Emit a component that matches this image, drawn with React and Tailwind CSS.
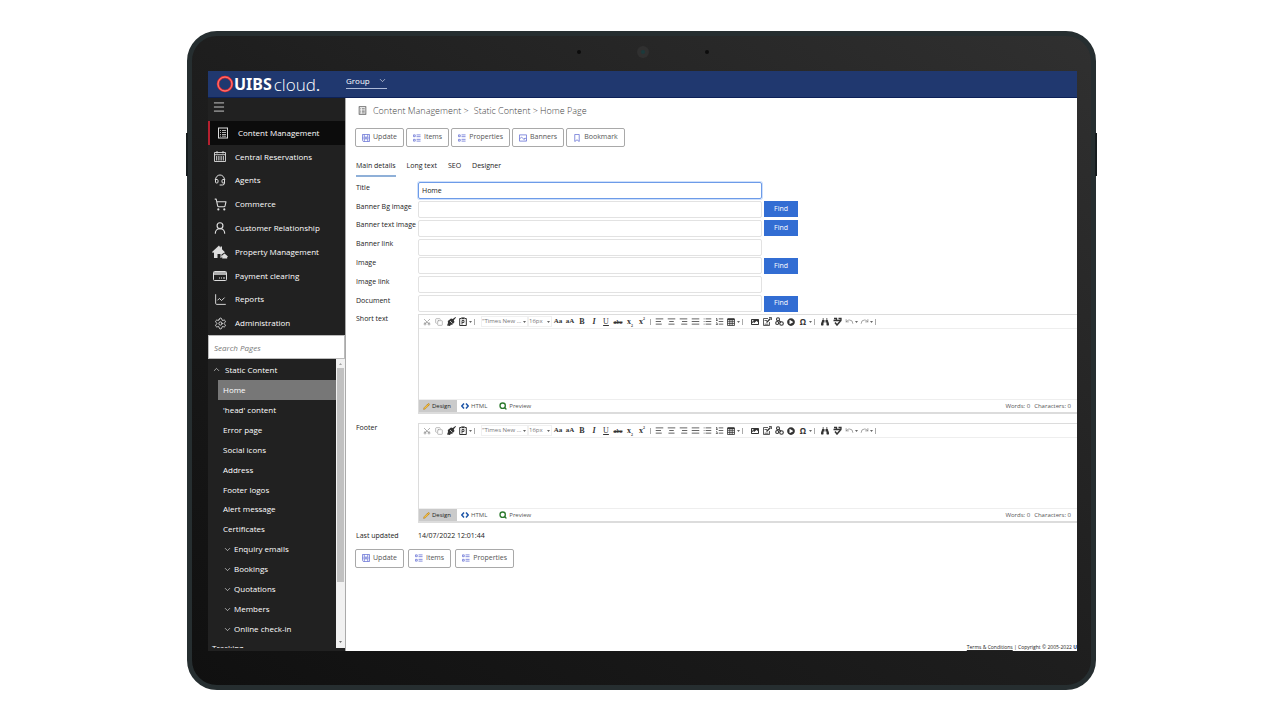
import {
  AlignCenter, AlignJustify, AlignLeft, AlignRight, ChartLine, ChevronDown, ChevronUp,
  Copy, Headset, List, ListOrdered, Menu, Pencil, Redo, Scissors, Search, Settings,
  ShoppingCart, Undo, UserRound,
} from 'lucide-react';
import { FaBinoculars, FaImage, FaPlayCircle } from 'react-icons/fa';

function PageIcon({ size = 12 }) {
  return (
    <svg width={size} height={size} viewBox="0 0 12 12" fill="none" stroke="currentColor">
      <rect x="1.5" y="1" width="9" height="10" />
      <path d="M3 3.5h1M5 3.5h4M3 5.5h1M5 5.5h4M3 7.5h1M5 7.5h4M3 9.2h1M5 9.2h4" strokeWidth="0.8" />
    </svg>
  );
}

function CalendarIcon() {
  return (
    <svg width="12" height="11" viewBox="0 0 12 11" fill="none" stroke="currentColor" strokeWidth="0.9">
      <path d="M.5 1.5h11v9H.5zM.5 3.7h11M3 0v2.500M9 0v2.500" />
      <path d="M2.500 5v4.500M4.300 5v4.500M6 5v4.500M7.700 5v4.500M9.500 5v4.500" strokeWidth="0.8" />
    </svg>
  );
}

function HouseIcon() {
  return (
    <svg width="16" height="14" viewBox="0 0 16 14" fill="currentColor">
      <path d="M7 .5 0 7l1 1 1-.8V13h3.500V9h3v4h1V9.500l3-2 .5-.3L10 4.200V1.500H8.500v1.200z" />
      <path d="m12.500 8.500-3.500 3 .6.6.6-.4V13.500h5v-1.800l.3.3.5-.6z" />
    </svg>
  );
}

function CardIcon() {
  return (
    <svg width="14" height="10" viewBox="0 0 14 10" fill="none" stroke="currentColor">
      <rect x=".5" y=".5" width="13" height="9" rx="1" />
      <path d="M1 2.500h12" strokeWidth="3" opacity=".75" />
      <path d="M6 7h1M8 7h1M10 7h2" />
    </svg>
  );
}

function SaveIcon() {
  return (
    <svg width="8" height="8" viewBox="0 0 9 9" fill="none" stroke="currentColor" strokeWidth="0.9">
      <path d="M.5.500h8v8h-7l-1-1zM2.500.500v3h4v-3M2.500 8.500v-3h4v3M.5 4.500h8" />
    </svg>
  );
}

function ItemsIcon() {
  return (
    <svg width="8" height="8" viewBox="0 0 9 9" fill="none" stroke="currentColor" strokeWidth="0.9">
      <path d="M.5 1h2v2h-2zM.5 6h2v2h-2zM4 1h4.500M4 3h4.500M4 6h4.500M4 8h4.500" />
    </svg>
  );
}

function BannerIcon() {
  return (
    <svg width="8" height="8" viewBox="0 0 9 9" fill="none" stroke="currentColor" strokeWidth="0.9">
      <path d="M.5 1h8v7h-8zM.5 5.500 3 3.500l3.500 3.500M5.500 5.500 7 4.500l1.500 1.500" />
    </svg>
  );
}

function BookmarkIcon() {
  return (
    <svg width="8" height="8" viewBox="0 0 9 9" fill="none" stroke="currentColor" strokeWidth="0.9">
      <path d="M2 .5h5v8L4.500 6.500 2 8.500z" />
    </svg>
  );
}

function PainterIcon() {
  return (
    <svg width="9" height="9" viewBox="0 0 9 9" fill="currentColor">
      <path d="M8.500 0 9 .5 6.800 3.200 7.500 5 5 8l-1-.5L3 9 0 8.500 1 6 .8 4 4 1.500l1.700.6z" />
      <path d="m3 4 2.500 2.500" stroke="#fff" strokeWidth="0.7" />
    </svg>
  );
}

function PasteIcon() {
  return (
    <svg width="8" height="9" viewBox="0 0 8 9" fill="none" stroke="currentColor">
      <path d="M2 1.500H.7v7h6.600v-7H6" />
      <path d="M2.300 1.300h3.400" strokeWidth="1.800" />
      <path d="M3 7.500v-4h2v2H3" strokeWidth="0.9" />
    </svg>
  );
}

function TableIcon() {
  return (
    <svg width="8" height="8" viewBox="0 0 8 8" fill="none" stroke="currentColor" strokeWidth="0.8">
      <path d="M.5 1.200h7" strokeWidth="2" />
      <path d="M.5 1v6.500h7V1M.5 3.700h7M.5 5.600h7M2.800 2v5.500M5.200 2v5.500" />
    </svg>
  );
}

function ImageEditIcon() {
  return (
    <svg width="9" height="9" viewBox="0 0 9 9" fill="none" stroke="currentColor" strokeWidth="0.8">
      <path d="M5 1.500H.5v7h6V5" />
      <path d="m3.500 5.500 4-4" strokeWidth="1.500" />
      <path d="M1.500 7.200h4M1.500 3.500H4M6 .5h2.500V3" />
    </svg>
  );
}

function LinkIcon() {
  return (
    <svg width="9" height="9" viewBox="0 0 9 9" fill="none" stroke="currentColor" strokeWidth="1.100">
      <circle cx="3" cy="2.200" r="1.500" />
      <circle cx="2.200" cy="6" r="1.500" />
      <circle cx="6.500" cy="6.500" r="1.800" />
      <path d="m4 3.500 2 2" />
    </svg>
  );
}

function SpellIcon() {
  return (
    <svg width="9" height="9" viewBox="0 0 9 9" fill="none" stroke="currentColor">
      <path d="M.5 3.500h8M1 1.500h2.500v2M5.500 1.500H8v2" strokeWidth="1.300" />
      <path d="m2 5.500 2 2.500L7.500 4" strokeWidth="1.500" />
    </svg>
  );
}

const navItems = [
  { icon: <PageIcon />, label: 'Content Management', active: true },
  { icon: <CalendarIcon />, label: 'Central Reservations' },
  { icon: <Headset size={12} strokeWidth={2} />, label: 'Agents' },
  { icon: <ShoppingCart size={13} strokeWidth={2} />, label: 'Commerce' },
  { icon: <UserRound size={14} strokeWidth={2} />, label: 'Customer Relationship' },
  { icon: <HouseIcon />, label: 'Property Management' },
  { icon: <CardIcon />, label: 'Payment clearing' },
  { icon: <ChartLine size={13} strokeWidth={1.75} />, label: 'Reports' },
  { icon: <Settings size={13} strokeWidth={1.75} />, label: 'Administration' },
];

const pages = [
  { label: 'Home', active: true },
  { label: "'head' content" },
  { label: 'Error page' },
  { label: 'Social icons' },
  { label: 'Address' },
  { label: 'Footer logos' },
  { label: 'Alert message' },
  { label: 'Certificates' },
  { label: 'Enquiry emails', folder: true },
  { label: 'Bookings', folder: true },
  { label: 'Quotations', folder: true },
  { label: 'Members', folder: true },
  { label: 'Online check-in', folder: true },
];

const actions = [
  { icon: SaveIcon, label: 'Update' },
  { icon: ItemsIcon, label: 'Items' },
  { icon: ItemsIcon, label: 'Properties' },
  { icon: BannerIcon, label: 'Banners' },
  { icon: BookmarkIcon, label: 'Bookmark' },
];

const fields = [
  { id: 'title', label: 'Title', value: 'Home', focused: true },
  { id: 'banner-bg', label: 'Banner Bg image', find: true },
  { id: 'banner-text', label: 'Banner text image', find: true },
  { id: 'banner-link', label: 'Banner link' },
  { id: 'image', label: 'Image', find: true },
  { id: 'image-link', label: 'Image link' },
  { id: 'document', label: 'Document', find: true },
];

function ActionButton({ icon: Icon, label }) {
  return (
    <button className="flex h-[19px] items-center gap-[3px] rounded-xs border border-[#a9a9a9] px-[6px] text-[7px] text-[#555]">
      <span className="text-[#6873d6]"><Icon /></span>
      {label}
    </button>
  );
}

function Tool({ label, children, className = '' }) {
  return (
    <button aria-label={label} className={`flex h-3 w-3 shrink-0 items-center justify-center ${className}`}>
      {children}
    </button>
  );
}

function Caret() {
  return (
    <svg width="3" height="2" viewBox="0 0 4 2" className="shrink-0" fill="currentColor"><path d="M0 0h4L2 2z" /></svg>
  );
}

function Divider() {
  return <span className="mx-[2px] h-[6px] w-px shrink-0 bg-[#aaa]" />;
}

function ToolSelect({ label, value, className }) {
  return (
    <span className={`flex h-[11px] shrink-0 items-center border border-[#f0f0f0] pr-px ${className}`}>
      <select aria-label={label} className="min-w-0 flex-1 appearance-none text-[6px] leading-[9px] text-[#777] outline-none">
        <option>{value}</option>
      </select>
      <Caret />
    </span>
  );
}

function Editor({ label }) {
  return (
    <section aria-label={label} className="flex h-[100px] min-w-0 flex-1 flex-col border-t border-b-2 border-l border-[#dcdcdc]">
      <div className="flex h-[14px] shrink-0 items-center border-b border-[#eee] pl-[2px] text-[#333]">
        <Tool label="Cut" className="text-[#888]"><Scissors size={8} className="-rotate-90" /></Tool>
        <Tool label="Copy" className="text-[#999]"><Copy size={8} /></Tool>
        <Tool label="Format painter"><PainterIcon /></Tool>
        <Tool label="Paste"><PasteIcon /></Tool>
        <Caret />
        <Divider />
        <ToolSelect label="Font" value={'"Times New ...'} className="ml-1 w-[47px]" />
        <ToolSelect label="Size" value="16px" className="w-[24px]" />
        <span className="flex font-['Liberation_Serif',serif] text-[8px] leading-none font-bold">
          <Tool label="Capitalise" className="text-[7px]">Aa</Tool>
          <Tool label="Change case" className="text-[7px]">aA</Tool>
          <Tool label="Bold">B</Tool>
          <Tool label="Italic" className="italic">I</Tool>
          <Tool label="Underline" className="font-normal underline">U</Tool>
          <Tool label="Strikethrough" className="text-[6px] line-through">abc</Tool>
          <Tool label="Subscript">x<span className="self-end text-[4px]">2</span></Tool>
          <Tool label="Superscript">x<span className="self-start pt-px text-[4px]">2</span></Tool>
        </span>
        <Divider />
        <span className="flex items-center">
          <Tool label="Align left"><AlignLeft size={9} /></Tool>
          <Tool label="Align centre"><AlignCenter size={9} /></Tool>
          <Tool label="Align right"><AlignRight size={9} /></Tool>
          <Tool label="Justify"><AlignJustify size={9} /></Tool>
          <Tool label="Bullets"><List size={9} /></Tool>
          <Tool label="Numbering"><ListOrdered size={9} /></Tool>
          <Tool label="Table"><TableIcon /></Tool>
          <Caret />
        </span>
        <Divider />
        <span className="ml-1 flex items-center">
          <Tool label="Insert image"><FaImage size={8} /></Tool>
          <Tool label="Edit image"><ImageEditIcon /></Tool>
          <Tool label="Insert link"><LinkIcon /></Tool>
          <Tool label="Media"><FaPlayCircle size={8} /></Tool>
          <Tool label="Symbol" className="text-[8px] font-bold">Ω</Tool>
          <Caret />
        </span>
        <Divider />
        <span className="ml-[2px] flex items-center">
          <Tool label="Find"><FaBinoculars size={8} /></Tool>
          <Tool label="Spelling"><SpellIcon /></Tool>
          <Tool label="Undo" className="text-[#888]"><Undo size={9} /></Tool>
          <Caret />
          <Tool label="Redo" className="text-[#888]"><Redo size={9} /></Tool>
          <Caret />
        </span>
        <Divider />
      </div>
      <textarea aria-label={label} className="min-h-0 w-full flex-1 resize-none text-[7px] outline-none" />
      <div className="flex h-[13px] shrink-0 items-center border-t border-[#eee] text-[6px] text-[#555]">
        <button className="flex h-full items-center gap-[2px] bg-[#cacaca] pr-[6px] pl-1 text-[#222]">
          <Pencil size={7} className="text-[#b07a20]" fill="#f5c242" />Design
        </button>
        <button className="flex items-center gap-[2px] pl-1">
          <svg width="8" height="6" viewBox="0 0 8 6" fill="none" stroke="#1e56a8" strokeWidth="1.500"><path d="M3 .5.800 3 3 5.500M5 .5 7.200 3 5 5.500" /></svg>
          HTML
        </button>
        <button className="ml-3 flex items-center gap-[2px]">
          <Search size={8} strokeWidth={4} className="text-[#2d7a2d]" />Preview
        </button>
        <span className="ml-auto pr-1">Words: 0</span>
        <span className="pr-[6px]">Characters: 0</span>
      </div>
    </section>
  );
}

function Sidebar() {
  return (
    <aside className="flex w-[137px] shrink-0 flex-col bg-[#212121] text-[8px] text-white">
      <button aria-label="Toggle menu" className="flex h-[23px] shrink-0 items-center pb-[5px] pl-1 text-[#ddd]">
        <Menu size={14} strokeWidth={1.5} />
      </button>
      <nav className="flex h-[214px] shrink-0 flex-col">
        {navItems.map(({ icon, label, active }) => (
          <a
            key={label}
            href="#"
            className={`flex flex-1 items-center ${active ? 'border-l-2 border-[#b5202f] bg-[#0c0c0c] pl-[5px]' : 'pl-1'}`}
          >
            <span className="flex w-4 justify-center text-[#ddd]">{icon}</span>
            <span className="ml-[7px]">{label}</span>
          </a>
        ))}
      </nav>
      <input
        aria-label="Search Pages"
        placeholder="Search Pages"
        className="h-6 w-full shrink-0 rounded-none border border-[#bbb] bg-white px-[5px] text-[8px] text-black italic outline-none placeholder:text-[#777]"
      />
      <div className="mb-[3px] flex min-h-0 flex-1">
        <div className="min-w-0 flex-1 overflow-hidden">
          <a href="#" className="flex h-[21px] items-center gap-1 pl-1">
            <ChevronUp size={9} strokeWidth={1.5} />Static Content
          </a>
          <div className="flex h-[259px] flex-col">
            {pages.map(({ label, active, folder }) => (
              <a
                key={label}
                href="#"
                className={`ml-[10px] flex flex-1 items-center gap-[2px] pl-[5px] ${active ? 'bg-[#777]' : ''}`}
              >
                {folder && <ChevronDown size={9} strokeWidth={1.5} />}
                {label}
              </a>
            ))}
          </div>
          <a href="#" className="flex items-center pt-[3px] pl-1">Tracking</a>
        </div>
        <div className="flex w-[9px] flex-col items-center bg-[#f1f1f1] text-[#444]">
          <span className="flex h-[9px] items-center text-[#888]"><span className="rotate-180"><Caret /></span></span>
          <span className="w-[7px] flex-[7] bg-[#c1c1c1]" />
          <span className="flex flex-[2] items-end pb-[5px]"><Caret /></span>
        </div>
      </div>
    </aside>
  );
}

function TopBar() {
  return (
    <header className="flex h-[27px] shrink-0 items-center border-b border-[#0c2158] bg-[#20386f] text-white">
      <a href="#" className="flex w-[137px] items-center pl-2 leading-none">
        <svg width="18" height="18" viewBox="0 0 18 18" fill="none">
          <circle cx="9" cy="9" r="7" stroke="#ef2b2d" strokeWidth="2.500" />
          <circle cx="9" cy="9" r="7" stroke="#ff9a94" strokeWidth="0.8" />
        </svg>
        <span className="font-['Noto_Sans',sans-serif] text-[16px] font-bold">UIBS</span>
        <span className="ml-[2px] text-[17px] font-light">cloud<b>.</b></span>
      </a>
      <button className="mb-[5px] ml-px flex items-center gap-2 border-b border-[#aebbd8] pb-px text-[8px]">
        Group <ChevronDown size={9} strokeWidth={1.5} />
      </button>
    </header>
  );
}

export default function App() {
  return (
    <div className="flex h-screen flex-col bg-white pt-[31px] pr-[184px] pb-[30px] pl-[187px] font-['Open_Sans','Noto_Sans',sans-serif]">
      <div className="relative flex min-h-0 flex-1 flex-col rounded-[30px] border-[5px] border-[#262e30] bg-linear-to-tr from-[#101010] via-[#1e1e1e] to-[#303030] pr-[14px] pb-[34px] pl-4">
        <span className="absolute top-[97px] -left-[6px] h-[43px] w-[2px] bg-[#161c1e]" />
        <span className="absolute top-[97px] -right-[6px] h-[43px] w-[2px] bg-[#161c1e]" />
        {/* Camera */}
        <div className="mb-1 flex h-[31px] shrink-0 items-center justify-center gap-[56px]">
          <span className="h-1 w-1 rounded-full bg-[#0c0c0c]" />
          <span className="flex h-3 w-3 items-center justify-center rounded-full bg-[#303030]">
            <span className="h-1 w-1 rounded-full bg-[#1c3a3c]" />
          </span>
          <span className="h-1 w-1 rounded-full bg-[#0c0c0c]" />
        </div>

        <div className="flex min-h-0 flex-1 flex-col overflow-hidden bg-white">
          <TopBar />
          <div className="flex min-h-0 flex-1">
            <Sidebar />
            <main className="flex min-w-0 flex-1 flex-col border-l border-[#aaa] text-[7px] text-[#222]">
              <div className="flex h-[25px] shrink-0 items-center pl-3 text-[9px] font-light text-[#444]">
                <PageIcon size={9} />
                <a href="#" className="ml-[6px]">Content Management &gt;</a>
                <a href="#" className="ml-[5px]">Static Content &gt;</a>
                <span className="ml-[2px]">Home Page</span>
              </div>

              <div className="mt-[5px] ml-[9px] flex gap-[2px]">
                {actions.map(a => <ActionButton key={a.label} {...a} />)}
              </div>

              <div className="mt-3 ml-[10px] flex gap-[11px]">
                <button className="h-[18px] border-b-2 border-[#8fb0d8] pb-[2px]">Main details</button>
                <button className="h-[18px] pb-[3px]">Long text</button>
                <button className="h-[18px] pb-[3px]">SEO</button>
                <button className="h-[18px] pb-[3px]">Designer</button>
              </div>

              {/* Fields */}
              <div className="mt-1 ml-[10px] flex h-[132px] shrink-0 flex-col">
                {fields.map(({ id, label, value, focused, find }) => (
                  <div key={id} className="flex flex-1 items-center">
                    <label htmlFor={id} className="w-[62px] shrink-0 pb-[5px] whitespace-nowrap">{label}</label>
                    <input
                      id={id}
                      defaultValue={value}
                      className={`h-[17px] w-[344px] rounded-xs border px-[3px] outline-none ${
                        focused ? 'border-[#6d9be8] ring-1 ring-[#cfe0fb]' : 'border-[#e2e2e2]'
                      }`}
                    />
                    {find && (
                      <button className="ml-[2px] h-4 w-[34px] bg-[#326dd3] text-white">Find</button>
                    )}
                  </div>
                ))}
              </div>

              <div className="mt-px ml-[10px] flex">
                <span className="w-[62px] shrink-0">Short text</span>
                <Editor label="Short text" />
              </div>
              <div className="mt-[9px] ml-[10px] flex">
                <span className="w-[62px] shrink-0">Footer</span>
                <Editor label="Footer" />
              </div>

              <div className="mt-2 ml-[10px] flex">
                <span className="w-[62px]">Last updated</span>
                <span>14/07/2022 12:01:44</span>
              </div>
              <div className="mt-[7px] ml-[9px] flex gap-1">
                {actions.slice(0, 3).map(a => <ActionButton key={a.label} {...a} />)}
              </div>

              <footer className="mt-auto text-right text-[5px] leading-[8px] whitespace-nowrap">
                <a href="#" className="underline">Terms &amp; Conditions</a> | Copyright © 2005-2022{' '}
                <b className="text-[#20386f]">U</b>
              </footer>
            </main>
          </div>
        </div>
      </div>
    </div>
  );
}
